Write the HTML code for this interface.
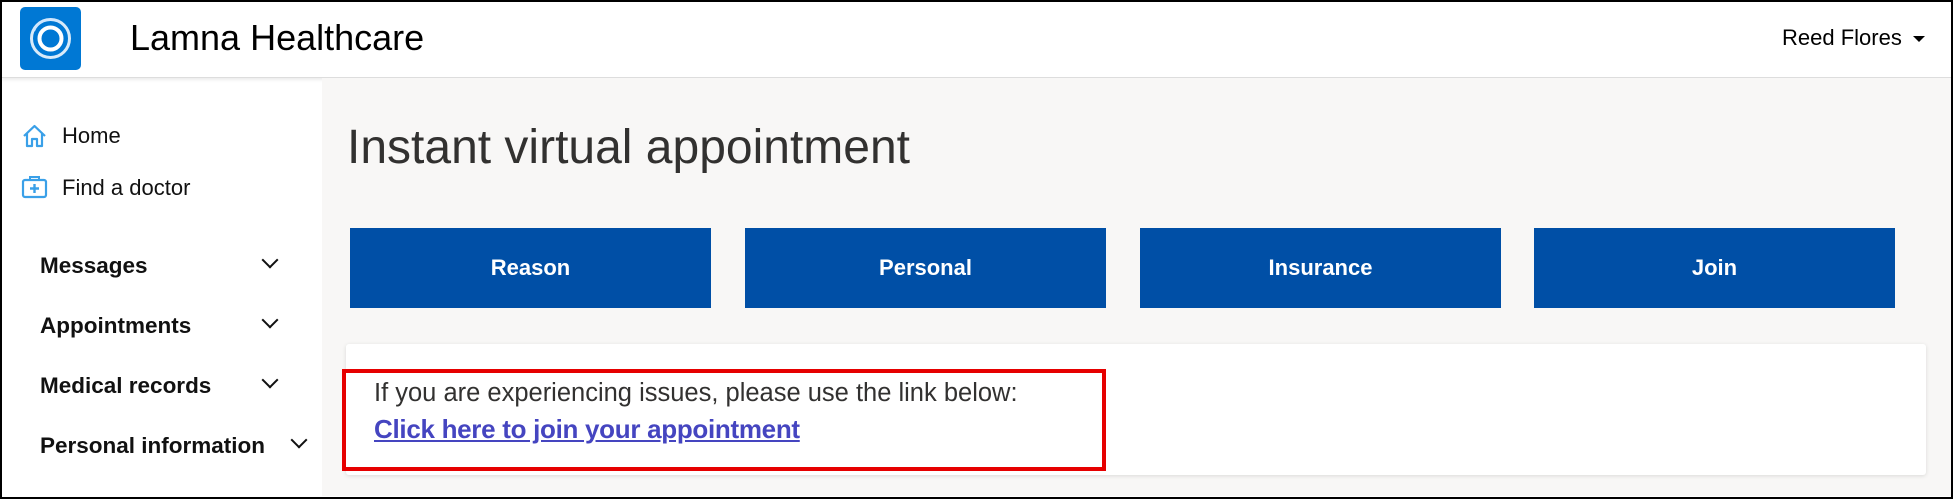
<!DOCTYPE html>
<html><head><style>
html,body{margin:0;padding:0}
body{width:1953px;height:499px;position:relative;overflow:hidden;background:#fff;font-family:"Liberation Sans",sans-serif}
.frame{position:absolute;left:0;top:0;width:1949px;height:495px;border:2px solid #000;box-sizing:content-box}
.hdr{position:absolute;left:2px;top:2px;width:1949px;height:75px;background:#fff;border-bottom:1px solid #ddd;box-shadow:0 2px 3px rgba(0,0,0,.08)}
.main{position:absolute;left:322px;top:78px;width:1629px;height:418px;background:#f8f7f6}
.abs{position:absolute;white-space:nowrap}
.btn{position:absolute;top:228px;height:80px;width:361px;background:#004fa6;color:#fff;font-size:22px;font-weight:bold;display:flex;align-items:center;justify-content:center}
.nav{position:absolute;left:40px;font-size:22.5px;font-weight:bold;color:#111}
.chev{position:absolute;width:10px;height:10px;border-right:2.5px solid #111;border-bottom:2.5px solid #111;transform:rotate(45deg)}
</style></head><body>
<div class="frame"></div>
<div class="hdr"></div>
<div class="abs" style="left:20px;top:7px;width:61px;height:63px;background:#0078d4;border-radius:5px">
<svg width="61" height="63" viewBox="0 0 61 63"><circle cx="30.5" cy="31.5" r="19" fill="none" stroke="#fff" stroke-width="3" opacity=".85"/><circle cx="30.5" cy="31.5" r="11" fill="none" stroke="#fff" stroke-width="4"/><path d="M14 24 A18 18 0 0 1 40 15" fill="none" stroke="#cfe6ff" stroke-width="2"/></svg></div>
<div class="abs" style="left:130px;top:17px;font-size:36px;color:#000">Lamna Healthcare</div>
<div class="abs" style="left:1782px;top:25px;font-size:22px;color:#000">Reed Flores</div>
<div class="abs" style="left:1913px;top:36px;width:0;height:0;border-left:6px solid transparent;border-right:6px solid transparent;border-top:6px solid #000"></div>
<div class="main"></div>
<svg class="abs" style="left:22px;top:124px" width="25" height="24" viewBox="0 0 25 24"><path d="M2 12 L12.5 2 L23 12 M5 9.5 V22 H10 V15 H15 V22 H20 V9.5" fill="none" stroke="#3aa0e8" stroke-width="2.2" stroke-linejoin="round"/></svg>
<div class="abs" style="left:62px;top:123px;font-size:22px;color:#111">Home</div>
<svg class="abs" style="left:21px;top:175px" width="27" height="24" viewBox="0 0 27 24"><rect x="2" y="5" width="23" height="17" rx="2" fill="none" stroke="#3aa0e8" stroke-width="2.2"/><path d="M9 5 V2 H18 V5" fill="none" stroke="#3aa0e8" stroke-width="2"/><path d="M13.5 9 V18 M9 13.5 H18" stroke="#3aa0e8" stroke-width="2.4"/></svg>
<div class="abs" style="left:62px;top:175px;font-size:22px;color:#111">Find a doctor</div>
<div class="nav" style="top:253px">Messages</div><div class="chev" style="left:264px;top:254px"></div>
<div class="nav" style="top:313px">Appointments</div><div class="chev" style="left:264px;top:314px"></div>
<div class="nav" style="top:373px">Medical records</div><div class="chev" style="left:264px;top:374px"></div>
<div class="nav" style="top:433px">Personal information</div><div class="chev" style="left:293px;top:434px"></div>
<div class="abs" style="left:347px;top:120px;font-size:48px;color:#323130">Instant virtual appointment</div>
<div class="btn" style="left:350px">Reason</div>
<div class="btn" style="left:745px">Personal</div>
<div class="btn" style="left:1140px">Insurance</div>
<div class="btn" style="left:1534px">Join</div>
<div class="abs" style="left:346px;top:344px;width:1580px;height:131px;background:#fff;border-radius:3px;box-shadow:0 1px 4px rgba(0,0,0,.12)"></div>
<div class="abs" style="left:342px;top:369px;width:756px;height:94px;border:4px solid #e60000"></div>
<div class="abs" style="left:374px;top:379px;font-size:25.5px;color:#323130">If you are experiencing issues, please use the link below:</div>
<div class="abs" style="left:374px;top:414px;font-size:26px;font-weight:bold;letter-spacing:-0.3px;color:#4545c0;text-decoration:underline">Click here to join your appointment</div>
</body></html>
